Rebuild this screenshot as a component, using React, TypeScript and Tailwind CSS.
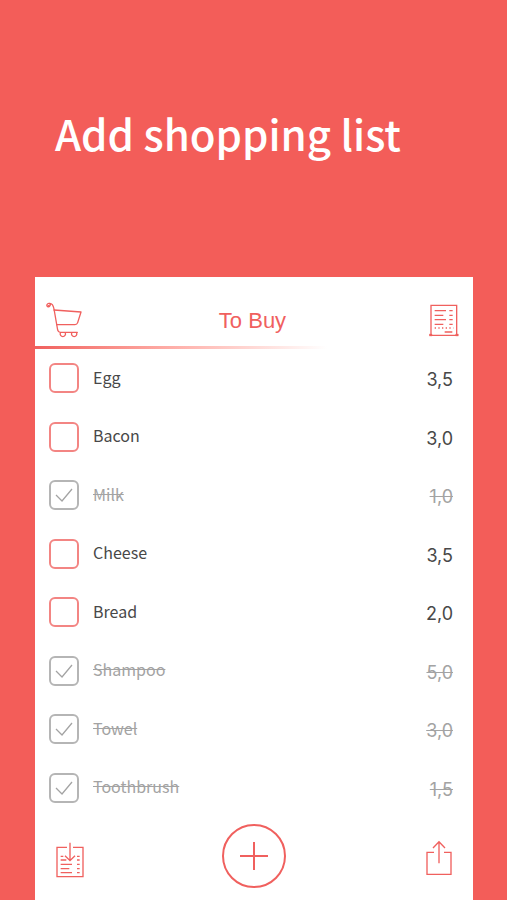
import { useState } from "react";

type Item = { name: string; price: string; done: boolean };

const initialItems: Item[] = [
  { name: "Egg", price: "3,5", done: false },
  { name: "Bacon", price: "3,0", done: false },
  { name: "Milk", price: "1,0", done: true },
  { name: "Cheese", price: "3,5", done: false },
  { name: "Bread", price: "2,0", done: false },
  { name: "Shampoo", price: "5,0", done: true },
  { name: "Towel", price: "3,0", done: true },
  { name: "Toothbrush", price: "1,5", done: true },
];

function CartIcon() {
  return (
    <svg viewBox="0 0 111 111" className="h-[37px] w-[37px]" fill="none" stroke="currentColor" strokeWidth="4" strokeLinecap="round" strokeLinejoin="round" aria-hidden="true">
      <path d="M7 11c4 2 8-2 5-5-4-4-11 0-9 6 2 4 8 3 9-1M10 4c9-1 12 6 14 17l11 63q2 7 8 7h51" />
      <path d="M24 24l81 6-10 32q-2 6-8 6H32" />
      <path d="M43 93a8 8 0 1 0 15 0M77 93a8 8 0 1 0 15 0" />
    </svg>
  );
}

function ReceiptIcon() {
  return (
    <svg viewBox="0 0 90 99" className="h-[33px] w-[30px]" fill="none" stroke="currentColor" strokeWidth="4" aria-hidden="true">
      <path d="M6 91V4h77v87M6 94h77" />
      <path d="M1 90h8v6H1zM80 90h8v6h-8z" fill="currentColor" strokeWidth="1" />
      <path d="M17 20h34M61 20h10M17 34h26M61 34h10M17 47h34M61 47h10M17 61h26M61 61h10M47 84h23" />
      <path d="M17 72h56" strokeDasharray="4 7" strokeWidth="4" />
    </svg>
  );
}

function ImportIcon() {
  return (
    <svg viewBox="0 0 84 108" className="h-9 w-7" fill="none" stroke="currentColor" strokeWidth="4" aria-hidden="true">
      <path d="M33 16H3v88h78V16H51M42 2v54M27 41l15 15 15-15" />
      <path d="M14 43h8M63 43h8M14 54h17M63 54h8M14 67h34M63 67h8M14 80h26M63 80h8M14 92h34M63 92h8" />
    </svg>
  );
}

function ShareIcon() {
  return (
    <svg viewBox="0 0 78 108" className="h-9 w-[26px]" fill="none" stroke="currentColor" strokeWidth="4" aria-hidden="true">
      <path d="M24 37H3v66h72V37H54M39 70V4M21 24L39 5l18 19" />
    </svg>
  );
}

export default function App() {
  const [items, setItems] = useState(initialItems);
  const toggle = (index: number) =>
    setItems(items.map((item, i) => (i === index ? { ...item, done: !item.done } : item)));

  return (
    <div className="flex min-h-screen flex-col bg-[#f35d59] pr-[34px] pl-[35px] font-['Noto_Sans_CJK_KR',sans-serif]">
      <h1 className="px-5 pt-[105px] pb-[116px] text-[42px] leading-[56px] font-medium text-white">Add shopping list</h1>
      <main className="flex flex-1 flex-col bg-white text-[#f0605e]">
        <header className="grid h-[69px] grid-cols-[1fr_auto_1fr] items-center pt-[18px] pr-[14px] pl-[11px]">
          <button type="button" aria-label="Cart" className="justify-self-start"><CartIcon /></button>
          <h2 className="font-['Liberation_Sans',sans-serif] text-[22px] leading-7">To Buy</h2>
          <button type="button" aria-label="Receipts" className="justify-self-end"><ReceiptIcon /></button>
        </header>
        <div className="h-[3px] w-2/3 bg-linear-to-r from-[#f0605e] to-white" />
        <ul className="grid flex-1 auto-rows-fr">
          {items.map((item, i) => (
            <li key={item.name} className={item.done ? "text-[#a3a3a3]" : "text-[#484848]"}>
              <label className="flex h-full items-center pr-5 pl-[14px]">
                <span className="grid">
                  <input
                    type="checkbox"
                    checked={item.done}
                    onChange={() => toggle(i)}
                    className="col-start-1 row-start-1 size-[30px] appearance-none rounded-md border-2 border-[#f38583] checked:border-[#b5b5b5]"
                  />
                  {item.done && (
                    <svg viewBox="0 0 30 30" className="pointer-events-none col-start-1 row-start-1 size-[30px]" fill="none" stroke="currentColor" strokeWidth="1.3" aria-hidden="true">
                      <path d="M7 15l6 6L23 9" />
                    </svg>
                  )}
                </span>
                <span className={`ml-[14px] flex-1 pb-[3px] text-[16px] leading-6 ${item.done ? "line-through" : ""}`}>{item.name}</span>
                <span className={`pt-1 font-['Inter',sans-serif] text-[18px] leading-6 ${item.done ? "line-through" : ""}`}>{item.price}</span>
              </label>
            </li>
          ))}
        </ul>
        <footer className="grid h-[83px] grid-cols-[1fr_auto_1fr] items-center px-[21px] pb-[5px]">
          <button type="button" aria-label="Import list" className="mt-2 justify-self-start"><ImportIcon /></button>
          <button type="button" aria-label="Add item" className="grid size-16 place-items-center rounded-full border-2 border-current">
            <svg viewBox="0 0 28 28" className="size-7" stroke="currentColor" strokeWidth="2" aria-hidden="true">
              <path d="M14 0v28M0 14h28" />
            </svg>
          </button>
          <button type="button" aria-label="Share" className="mt-1 justify-self-end"><ShareIcon /></button>
        </footer>
      </main>
    </div>
  );
}
